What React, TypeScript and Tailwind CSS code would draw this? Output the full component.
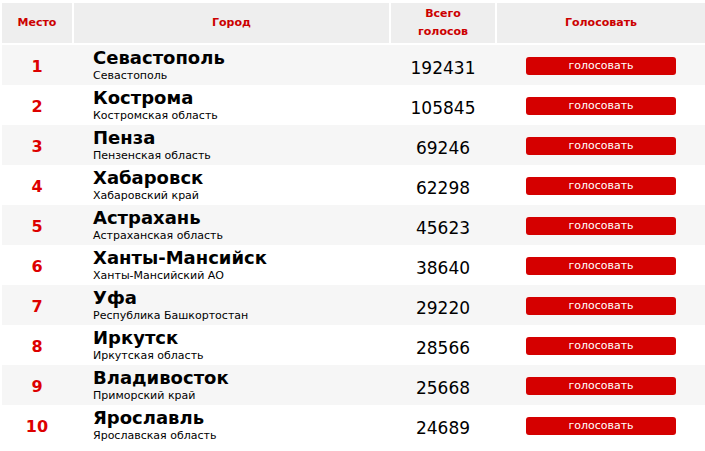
const rows = [
  { city: "Севастополь", region: "Севастополь", votes: 192431 },
  { city: "Кострома", region: "Костромская область", votes: 105845 },
  { city: "Пенза", region: "Пензенская область", votes: 69246 },
  { city: "Хабаровск", region: "Хабаровский край", votes: 62298 },
  { city: "Астрахань", region: "Астраханская область", votes: 45623 },
  { city: "Ханты-Мансийск", region: "Ханты-Мансийский АО", votes: 38640 },
  { city: "Уфа", region: "Республика Башкортостан", votes: 29220 },
  { city: "Иркутск", region: "Иркутская область", votes: 28566 },
  { city: "Владивосток", region: "Приморский край", votes: 25668 },
  { city: "Ярославль", region: "Ярославская область", votes: 24689 },
];

export default function App() {
  return (
    <div className="min-h-screen w-[705px] overflow-hidden bg-white pl-[2px] pt-[3px] font-['DejaVu_Sans',Verdana,sans-serif]">
      <div className="mb-[2px] flex h-[40px] gap-[2px] text-[11px] font-bold leading-[18px] text-[#cc0000]">
        <div className="flex w-[70px] items-center justify-center bg-[#eeeeee]">Место</div>
        <div className="flex w-[315px] items-center justify-center bg-[#eeeeee]">Город</div>
        <div className="flex w-[104px] items-center justify-center bg-[#eeeeee] text-center">
          Всего
          <br />
          голосов
        </div>
        <div className="flex w-[208px] items-center justify-center bg-[#eeeeee]">Голосовать</div>
      </div>

      {rows.map((row, i) => (
        <div
          key={row.city}
          className={`flex h-[40px] gap-[2px] ${i % 2 === 0 ? "bg-[#f6f6f6]" : "bg-white"}`}
        >
          <div className="flex w-[70px] items-center justify-center pt-[2px] text-[16px] font-bold leading-[19px] text-[#dd0000]">
            {i + 1}
          </div>
          <div className="flex w-[315px] flex-col justify-center pl-[19px] text-black">
            <div className="text-[18px] font-bold leading-[20px]">{row.city}</div>
            <div className="text-[11px] leading-[15px]">{row.region}</div>
          </div>
          <div className="flex w-[104px] items-center justify-center pt-[6px] text-[17px] leading-[20px] text-black">
            {row.votes}
          </div>
          <div className="flex w-[208px] items-center justify-center pt-[2px]">
            <button
              type="button"
              className="h-[18px] w-[150px] rounded-[3px] bg-[#d50000] text-[11px] leading-[18px] text-white"
            >
              голосовать
            </button>
          </div>
        </div>
      ))}
    </div>
  );
}
